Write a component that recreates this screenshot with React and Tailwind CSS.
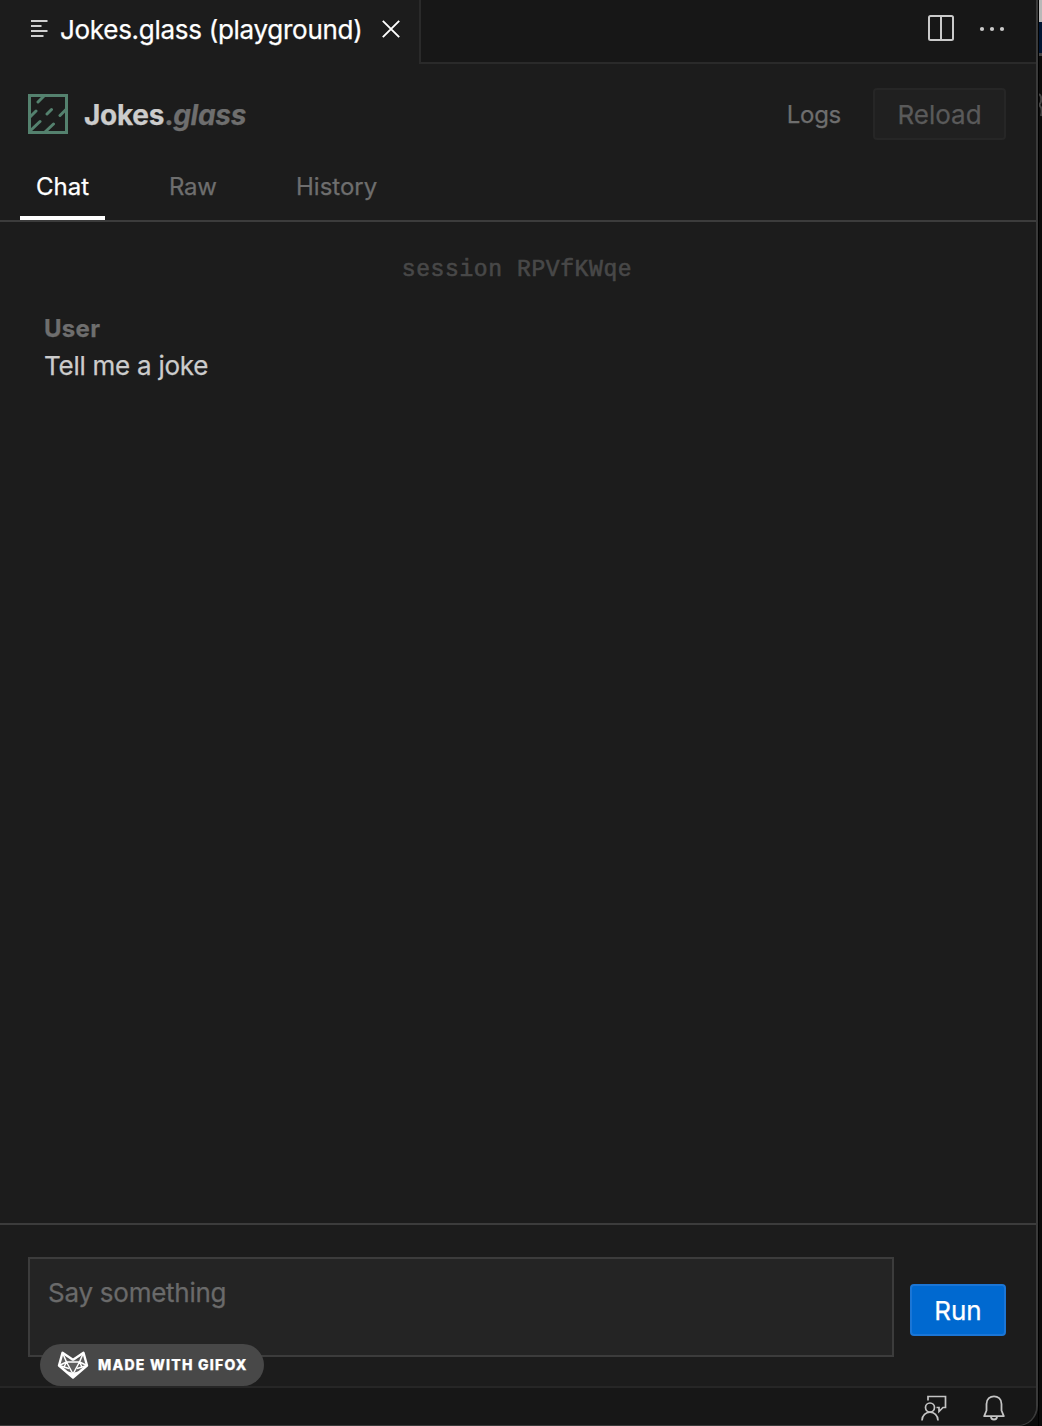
import React from "react";

function FileIcon() {
  return (
    <svg className="h-[18px] w-[17px] shrink-0" viewBox="0 0 17 18" stroke="#cfcfcf" strokeWidth="2">
      <path d="M0 1H16.500M0 6H10.500M0 11H16.500M0 16H12.500" />
    </svg>
  );
}

function CloseIcon() {
  return (
    <svg className="h-[18px] w-[18px] shrink-0" viewBox="0 0 18 18" stroke="#fff" strokeWidth="1.9">
      <path d="M.8.8 17.200 17.200M17.200.8.8 17.200" />
    </svg>
  );
}

function SplitIcon() {
  return (
    <svg className="h-[26px] w-[26px] shrink-0" viewBox="0 0 26 26" fill="none" stroke="#cacaca" strokeWidth="2">
      <rect x="1" y="1" width="24" height="24" rx="1.500" />
      <path d="M13 1V25" />
    </svg>
  );
}

function MoreIcon() {
  return (
    <svg className="mt-[2px] h-[6px] w-[26px] shrink-0" viewBox="0 0 26 6" fill="#cacaca">
      <circle cx="3" cy="3" r="2.100" />
      <circle cx="13" cy="3" r="2.100" />
      <circle cx="23" cy="3" r="2.100" />
    </svg>
  );
}

function GlassLogo() {
  return (
    <svg className="h-[40px] w-[40px] shrink-0" viewBox="0 0 40 40" fill="none" stroke="#54816e">
      <rect x="1.500" y="1.500" width="37" height="37" strokeWidth="3" />
      <path
        d="M10 8 16 2M2 23 8 17M19 20 23.500 15.500M32 21.500 38 15.500M2 37 12 27.500M17 38 25.500 30"
        strokeWidth="3"
        strokeLinecap="round"
      />
    </svg>
  );
}

function FoxIcon() {
  return (
    <svg className="h-[28px] w-[32px] shrink-0" viewBox="0 0 32 28" fill="none" stroke="#fff" strokeLinejoin="round">
      <path d="M5.500 2 11 8.500H21L26.500 2 30 14.500 16 26 2 14.500Z" fill="#8a8a8a" stroke="none" opacity=".35" />
      <path d="M5.500 1.800 15.500 8.500H16.500L26.500 1.800 30 14.500 16 26.500 2 14.500Z" strokeWidth="2.400" />
      <path d="M5.500 1.800 9.500 11 2 14.500 12 17.500M26.500 1.800 22.500 11 30 14.500 20 17.500" strokeWidth="1.500" />
      <path d="M9.500 11H22.500L16 23Z M9.500 11 7 16 M22.500 11 25 16" strokeWidth="1.500" />
      <path d="M10.500 20.800 16 22.500 21.500 20.800 16 26.500Z" fill="#fff" strokeWidth="1" />
    </svg>
  );
}

function FeedbackIcon() {
  return (
    <svg className="h-[26px] w-[26px] shrink-0" viewBox="0 0 26 26" fill="none" stroke="#c4c4c4" strokeWidth="1.700">
      <path d="M7 5.500V1.500H24.500V12.500H22L18 16.500V12.500H15.500" />
      <circle cx="9" cy="12.500" r="4.500" />
      <path d="M1 25.500C1 14.500 17 14.500 17 25.500" />
    </svg>
  );
}

function BellIcon() {
  return (
    <svg className="h-[26px] w-[22px] shrink-0" viewBox="0 0 22 26" fill="none" stroke="#c4c4c4" strokeWidth="1.800">
      <path d="M3.500 15.500V9C3.500-1.300 18.500-1.300 18.500 9V15.500L20.800 21.200H1.200Z" strokeLinejoin="round" />
      <path d="M8 21.500C8 25.500 14 25.500 14 21.500" />
    </svg>
  );
}

export default function App() {
  return (
    <div className="flex h-[1426px] w-[1042px] overflow-hidden bg-[#0b0b0b] font-['Inter',sans-serif] whitespace-nowrap [-webkit-text-stroke:0.25px]">
      <div className="flex w-[1038px] shrink-0 flex-col overflow-hidden rounded-br-[20px] border-r-2 border-b border-[#3a3a3a] bg-[#1c1c1c]">
        <header className="flex h-[64px] shrink-0">
          <div className="flex w-[419px] shrink-0 items-center pb-[4px] pl-[31px]">
            <div className="-mt-[2px] flex"><FileIcon /></div>
            <span className="ml-[12px] w-[303px] text-[26px] leading-[32px] tracking-[-0.28px] text-white">Jokes.glass (playground)</span>
            <div className="-mt-[2px] ml-[19px] flex"><CloseIcon /></div>
          </div>
          <div className="flex flex-1 items-center justify-end gap-[25px] border-b-2 border-l-2 border-[#2a2a2a] bg-[#171717] pr-[31px] pb-[6px]">
            <SplitIcon />
            <MoreIcon />
          </div>
        </header>

        <div className="flex h-[100px] shrink-0 items-center pr-[30px] pl-[28px]">
          <GlassLogo />
          <h1 className="mt-[2px] ml-[16px] text-[28px] leading-[32px] font-bold tracking-[-0.28px] text-[#cccccc]">
            Jokes<span className="text-[#6e6e6e]">.<i>glass</i></span>
          </h1>
          <span className="mt-[2px] ml-auto text-[24px] leading-[30px] tracking-[-0.3px] text-[#6e6e6e]">Logs</span>
          <button className="ml-[32px] flex h-[52px] w-[133px] items-center justify-center rounded-[4px] border-2 border-[#262626] bg-[#202020] text-[26px] text-[#5a5a5a]">
            Reload
          </button>
        </div>

        <nav className="flex h-[58px] shrink-0 border-b-2 border-[#3c3c3c] pl-[20px] text-[24px] leading-[30px] text-[#6e6e6e]">
          <div className="h-[56px] w-[85px] border-b-4 border-white pt-[8px] pl-[16px] text-white">Chat</div>
          <div className="w-[127px] pt-[8px] pl-[64px] tracking-[-0.3px]">Raw</div>
          <div className="pt-[8px] pl-[64px]">History</div>
        </nav>

        <main className="flex h-[1001px] shrink-0 flex-col pt-[33px]">
          <p className="w-[1034px] text-center font-['Liberation_Mono',monospace] text-[23px] leading-[30px] tracking-[0.6px] text-[#484848] [-webkit-text-stroke:0.6px]">session RPVfKWqe</p>
          <div className="mt-[29px] pl-[44px]">
            <p className="text-[24px] leading-[30px] font-bold tracking-[0.3px] text-[#6e6e6e]">User</p>
            <p className="mt-[6px] text-[26px] leading-[32px] tracking-[-0.25px] text-[#cccccc]">Tell me a joke</p>
          </div>
        </main>

        <section className="flex h-[163px] shrink-0 border-t-2 border-[#3c3c3c] pt-[32px] pl-[28px]">
          <div className="h-[100px] w-[866px] border-2 border-[#3c3c3c] bg-[#242424] pt-[18px] pl-[18px] text-[26px] leading-[32px] tracking-[-0.25px] text-[#6a6a6a]">
            Say something
          </div>
          <button className="mt-[27px] ml-[16px] flex h-[52px] w-[96px] items-center justify-center rounded-[4px] border-2 border-[#1b76d6] bg-[#0069d0] text-[26px] text-white">
            Run
          </button>
        </section>

        <footer className="flex h-[39px] shrink-0 items-start justify-end gap-[36px] border-t-2 border-[#262626] bg-[#171717] pt-[7px] pr-[31px]">
          <FeedbackIcon />
          <BellIcon />
        </footer>
      </div>

      <aside className="flex w-[4px] shrink-0 flex-col border-l border-black bg-[#0b0b0b]">
        <div className="h-[22px] bg-[#b8b8b8]" />
        <div className="h-[31px] bg-[#001532]" />
        <div className="h-[3px] bg-[#444444]" />
        <svg className="mt-[36px] h-[26px] w-[3px]" viewBox="0 0 3 26" fill="none" stroke="#444" strokeWidth="2">
          <path d="M0 2C3 4 3 10 0 13C3 15 3 20 2 24" />
        </svg>
      </aside>

      <div className="absolute top-[1344px] left-[40px] flex h-[42px] w-[224px] items-center rounded-full bg-[#484848] pl-[17px]">
        <FoxIcon />
        <span className="ml-[9px] text-[14px] leading-[20px] font-extrabold tracking-[1.25px] text-white">MADE WITH GIFOX</span>
      </div>
    </div>
  );
}
